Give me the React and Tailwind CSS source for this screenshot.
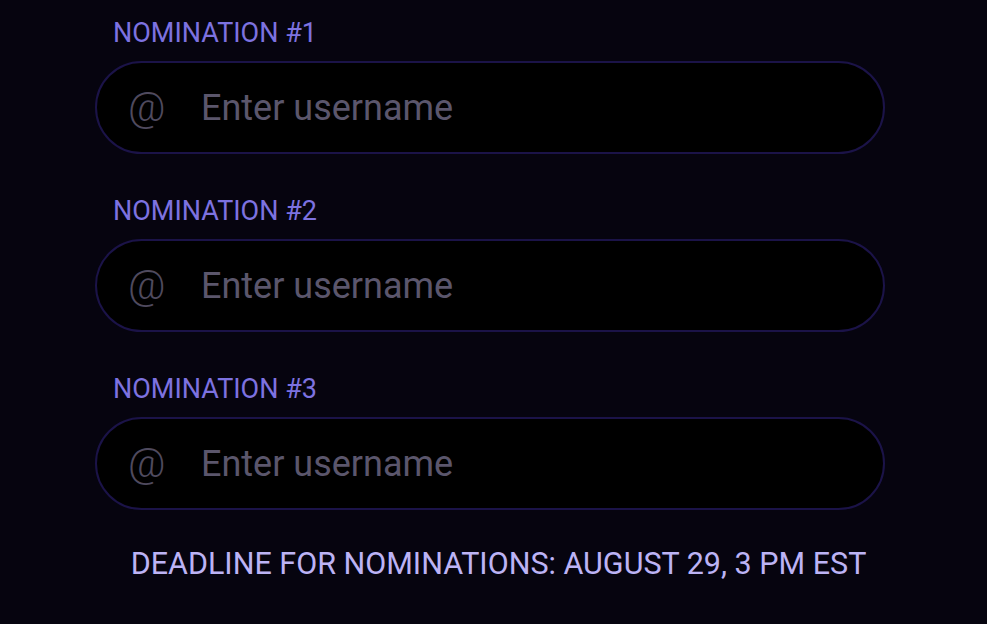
import React from "react";

const NominationField = ({ index }) => {
  return (
    <div className="flex flex-col">
      <label className="pl-[18px] text-[27px] leading-[30px] text-[#7d72e0] uppercase">
        Nomination #{index}
      </label>
      <div className="mt-[13px] flex h-[93px] w-[790px] items-center rounded-full border-2 border-[#1b1348] bg-black pl-[31px]">
        <span className="w-[73px] text-[41px] font-light leading-none text-[#4f4a5e]">@</span>
        <input
          type="text"
          placeholder="Enter username"
          className="flex-1 bg-transparent text-[36px] leading-none text-[#d0cce0] outline-none placeholder:text-[#5b566c]"
        />
      </div>
    </div>
  );
};

const App = () => {
  return (
    <div
      className="min-h-[624px] w-full bg-[#06040f] pt-[18px]"
      style={{ fontFamily: "Roboto, 'Liberation Sans', sans-serif" }}
    >
      <div className="ml-[95px] flex w-[790px] flex-col gap-[42px]">
        <NominationField index={1} />
        <NominationField index={2} />
        <NominationField index={3} />
      </div>
      <p className="mt-[37px] pl-[10px] text-center text-[30.5px] leading-[34px] text-[#bcb3f5] uppercase">
        Deadline for nominations: August 29, 3 PM EST
      </p>
    </div>
  );
};

export default App;
